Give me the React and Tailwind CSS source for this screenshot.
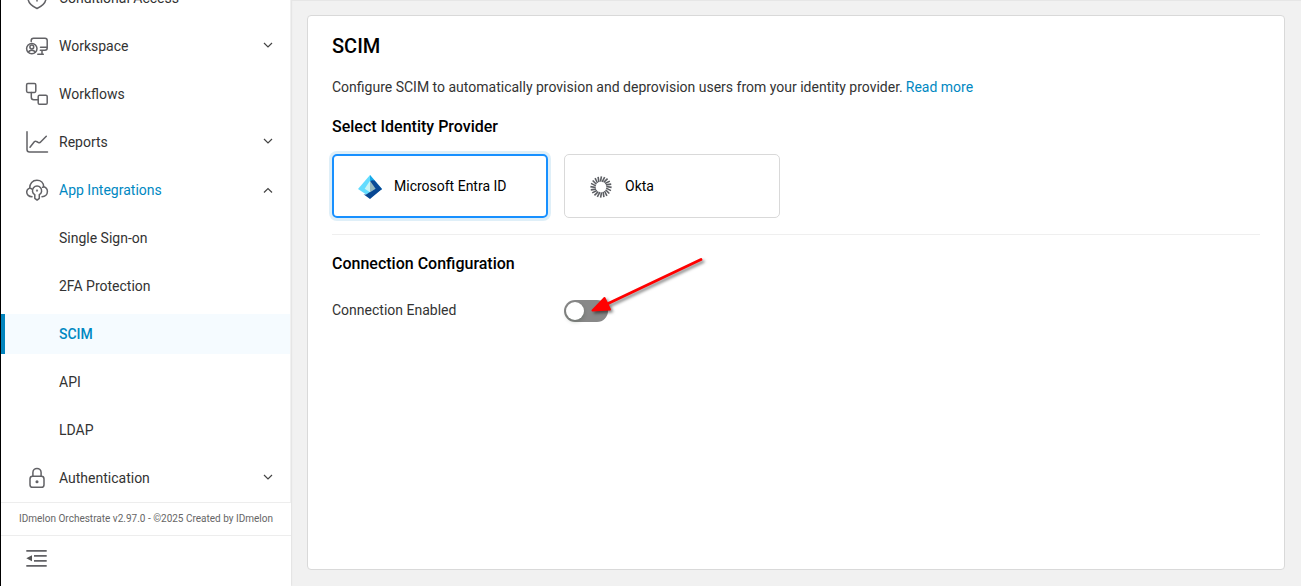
import React from "react";

function Icon({ children }) {
  return (
    <svg
      width="24"
      height="24"
      viewBox="0 0 24 24"
      fill="none"
      stroke="#626266"
      strokeWidth="1.5"
      strokeLinecap="round"
      strokeLinejoin="round"
      className="shrink-0"
    >
      {children}
    </svg>
  );
}

const icons = {
  shield: (
    <Icon>
      <path d="M12 2 21 5.5V12c0 4.800-3.500 8-9 10.500C6.500 20 3 16.800 3 12V5.500Z" />
      <path d="M12 9v6" />
    </Icon>
  ),
  workspace: (
    <Icon>
      <g strokeWidth="1.500">
        <path d="M6.200 7.500V6.500Q6.200 4.200 8.500 4.200H20Q22.200 4.200 22.200 6.500V14.100Q22.200 16.300 20 16.300H15.300M15.500 13.300H22.200M17 16.300V20M12.800 20.200H18.300" />
        <circle cx="6.800" cy="14.600" r="5.200" />
        <circle cx="6.800" cy="13" r="1.900" />
        <path d="M3.500 18.300Q4 16.200 6.800 16.200T10.100 18.300" />
      </g>
    </Icon>
  ),
  workflows: (
    <Icon>
      <rect x="1.600" y="1.600" width="9.200" height="8.800" rx="1.300" />
      <rect x="13.200" y="13.200" width="9" height="9" rx="1.300" />
      <path d="M6.300 10.400V15.300Q6.300 17.800 8.800 17.800H13.200" />
    </Icon>
  ),
  reports: (
    <Icon>
      <path d="M2 1.800V19.500Q2 22 4.500 22H22.500" />
      <path d="M5 17.200 9.300 11.800Q10.300 10.700 11.500 11.500L13.500 12.600Q14.700 13.200 15.600 12L21.300 6.200" />
    </Icon>
  ),
  cloud: (
    <Icon>
      <path d="M7 18.700C3.800 18.700 1.700 16.700 1.700 14.100C1.700 12.200 2.800 10.800 4.700 10.100C4.600 5.300 7.600 2.300 11.900 2.300C16 2.300 18.600 5 18.700 8.800C21 9.400 22.400 11.400 22.400 13.600C22.400 16.600 20.200 18.700 17 18.700" />
      <path d="M5.200 10.200 6.800 11M18.700 8.900 17.600 9.200" />
      <path d="M9.800 16.700A4.600 4.600 0 1 1 14.300 16.700V20.300L12.100 22.100 9.800 20.300Z" />
      <circle cx="12" cy="12.600" r=".4" />
    </Icon>
  ),
  lock: (
    <Icon>
      <rect x="5" y="10.300" width="14" height="11" rx="2.600" />
      <path d="M7.900 10.300V6.500a4.100 4.100 0 0 1 8.200 0V10.300" />
      <circle cx="12" cy="15.800" r=".8" fill="#626266" />
    </Icon>
  ),
};

const items = [
  { label: "Conditional Access", icon: "shield" },
  { label: "Workspace", icon: "workspace", arrow: "down" },
  { label: "Workflows", icon: "workflows" },
  { label: "Reports", icon: "reports", arrow: "down" },
  { label: "App Integrations", icon: "cloud", arrow: "up", open: true },
  { label: "Single Sign-on" },
  { label: "2FA Protection" },
  { label: "SCIM", active: true },
  { label: "API" },
  { label: "LDAP" },
  { label: "Authentication", icon: "lock", arrow: "down" },
];

function NavItem({ label, icon, arrow, open, active }) {
  return (
    <div
      className={
        "flex h-10 shrink-0 items-center border-l-4 pr-[17px] pl-5 text-[14px] " +
        (active
          ? "border-[#0284bd] bg-[#f5fbff] font-medium text-[#0088c2]"
          : open
            ? "border-transparent text-[#0088c2]"
            : "border-transparent text-[#333]")
      }
    >
      <span className="mr-[10px] w-6">{icon && icons[icon]}</span>
      <span className="flex-1">{label}</span>
      {arrow && (
        <svg width="10" height="10" viewBox="0 0 10 10" fill="none" stroke="#444" strokeWidth="1.200" className="-mt-0.5">
          <path d={arrow === "down" ? "M1 3 5 7 9 3" : "M1 8.500 5 4.500 9 8.500"} />
        </svg>
      )}
    </div>
  );
}

function EntraLogo() {
  return (
    <svg width="24" height="24" viewBox="0 0 24 24" className="relative top-px">
      <path d="M12 0 0 14 12 22 24 14Z" fill="#62dcff" />
      <path d="M12 4.500 16.500 5.200 24 14 17.500 18 12 12Z" fill="#0a4a96" />
      <path d="M12 0 16.700 5.500Q13.800 4.600 12 6.500Z" fill="#18a8e8" />
      <path d="M5.500 19.200Q7.500 20 9 19L17 13.500 24 14 12 24Z" fill="#074793" />
      <path d="M12 5.800 6.700 13.800 12 17.300Z" fill="#c8f4f6" />
      <path d="M12 5.800 17.600 13.800 12 17.300Z" fill="#94b8bf" />
    </svg>
  );
}

function OktaLogo() {
  return (
    <svg width="24" height="24" viewBox="0 0 24 24" stroke="#5c5e63" strokeWidth="1.600" className="relative top-px">
      {Array.from({ length: 20 }, (_, i) => (
        <path key={i} d="M11.500 6.700 12.400 1.400" transform={`rotate(${i * 18} 12 12)`} />
      ))}
    </svg>
  );
}

export default function App() {
  return (
    <div className="relative flex h-[586px] w-[1301px] overflow-hidden bg-[#f1f1f1] font-['Roboto',sans-serif] text-[14px]">
      <aside className="flex w-[291px] shrink-0 flex-col border-l border-black bg-white shadow-[0_0_2px_rgba(0,0,0,0.15)]">
        <nav className="flex h-[502px] shrink-0 flex-col justify-end gap-2 overflow-hidden border-r border-[#f0f0f0] pb-1">
          {items.map((item) => (
            <NavItem key={item.label} {...item} />
          ))}
        </nav>
        <div className="flex h-[34px] shrink-0 items-center border-y border-[#ededed] pb-0.5 pl-[18px] text-[10px] whitespace-nowrap text-[#666]">
          IDmelon Orchestrate v2.97.0 - ©2025 Created by IDmelon
        </div>
        <div className="pt-[14px] pl-[25px]">
          <svg width="22" height="18" viewBox="0 0 22 18" stroke="#626266" strokeWidth="1.600">
            <path d="M.3 .9H20.700M8 5.900H20.700M8 10.900H20.700M.3 15.900H20.700" />
            <path d="M6 5.300V11.300L.3 8.300Z" fill="#555" stroke="none" />
          </svg>
        </div>
      </aside>

      <main className="flex-1 border-t border-[#e6e6e6] pt-[14px] pr-4 pl-4">
        <section className="h-[555px] w-[978px] rounded border border-[#d9d9d9] bg-white px-6 pt-4 text-[#333]">
          <h1 className="h-7 text-[20px] leading-7 font-medium text-black">SCIM</h1>
          <p className="mt-4 h-[22px] leading-[22px]">
            Configure SCIM to automatically provision and deprovision users from your identity provider.
            <a className="ml-[3px] text-[#0088c2]">Read more</a>
          </p>
          <h2 className="mt-[17px] text-[16px] leading-6 font-medium text-black">Select Identity Provider</h2>
          <div className="mt-[15px] flex gap-4 text-black">
            <div className="flex h-16 w-[216px] items-center rounded-[5px] border-2 border-[#1890ff] pl-6 shadow-[0_0_0_3px_#dfeff8]">
              <EntraLogo />
              <span className="ml-3">Microsoft Entra ID</span>
            </div>
            <div className="flex h-16 w-[216px] items-center rounded-[5px] border border-[#d9d9d9] pl-6">
              <OktaLogo />
              <span className="ml-3">Okta</span>
            </div>
          </div>
          <hr className="mt-4 border-[#efefef]" />
          <h2 className="mt-[17px] text-[16px] leading-6 font-medium text-black">Connection Configuration</h2>
          <div className="mt-[22px] flex h-6 items-center">
            <span className="w-[232px]">Connection Enabled</span>
            <button className="mt-0.5 h-[22px] w-11 rounded-full bg-[#888] p-0.5">
              <span className="block size-[18px] rounded-full bg-white shadow-[0_2px_4px_rgba(0,35,11,0.2)]" />
            </button>
          </div>
        </section>
      </main>

      <svg
        width="130"
        height="70"
        viewBox="0 0 130 70"
        className="absolute top-[252px] left-[582px] drop-shadow-[2px_2px_1.500px_rgba(0,0,0,0.5)]"
      >
        <path d="M119 7.500 23 53" stroke="#f00" strokeWidth="2.800" strokeLinecap="round" />
        <path d="M10.500 58.500 22.500 46 28 57.500Z" fill="#f00" stroke="#f00" strokeWidth="2" strokeLinejoin="round" />
      </svg>
    </div>
  );
}
